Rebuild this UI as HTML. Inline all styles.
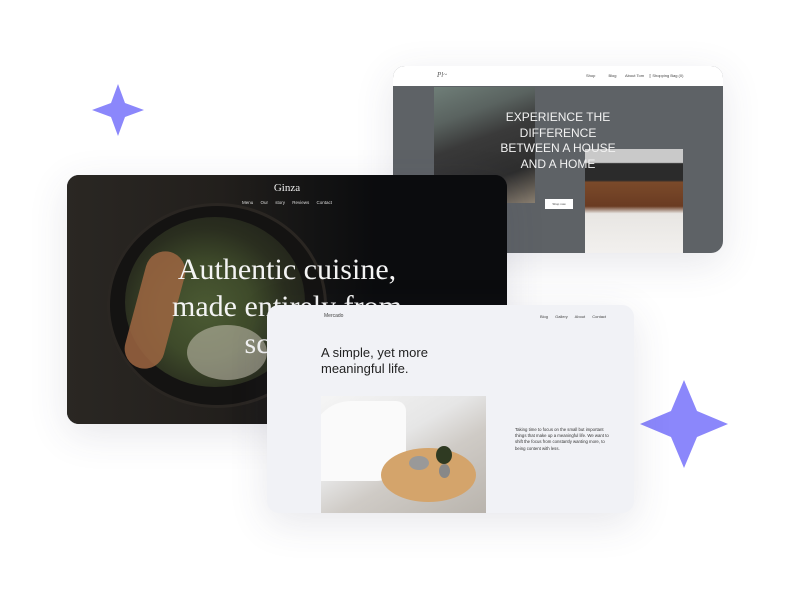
<!DOCTYPE html>
<html><head><meta charset="utf-8"><style>
*{margin:0;padding:0;box-sizing:border-box}
body{width:806px;height:608px;background:#fff;position:relative;overflow:hidden;font-family:"Liberation Sans",sans-serif}
.abs{position:absolute}
.card{position:absolute;overflow:hidden;border-radius:12px;box-shadow:0 10px 40px rgba(60,60,90,.12)}
</style></head><body>
<svg class="abs" style="left:0;top:0" width="806" height="608">
<path d="M118 84 L125 103 L144 110 L125 117 L118 136 L111 117 L92 110 L111 103Z" fill="#8b87fb"/>
<path d="M684 380 L697 411 L728 424 L697 437 L684 468 L671 437 L640 424 L671 411Z" fill="#8b87fb"/>
</svg>

<div class="card" style="left:393px;top:66px;width:330px;height:187px;background:#5e6266">
  <div class="abs" style="left:0;top:0;width:330px;height:20px;background:#fff"></div>
  <div class="abs" style="left:44px;top:5px;font:italic 7px 'Liberation Serif',serif;color:#555">Pl~</div>
  <div class="abs" style="left:193px;top:7px;font-size:4px;color:#444;word-spacing:12px">Shop Blog</div>
  <div class="abs" style="left:232px;top:7px;font-size:4px;color:#444">About Tom</div>
  <div class="abs" style="left:256px;top:7px;font-size:4px;color:#444">▯ Shopping Bag (0)</div>
  <div class="abs" style="left:41px;top:21px;width:101px;height:116px;background:linear-gradient(160deg,#6f7e78 0%,#5a6360 25%,#3a3a3a 45%,#2e2e2e 75%,#8a7f70 100%)"></div>
  <div class="abs" style="left:192px;top:83px;width:98px;height:104px;background:linear-gradient(180deg,#c9c9c9 0%,#c9c9c9 13%,#2b2b2b 14%,#2b2b2b 30%,#7b4a2a 32%,#6a3b22 55%,#e8e6e3 62%,#f2f0ee 100%)"></div>
  <div class="abs" style="left:0;top:44px;width:330px;text-align:center;color:#f2f2f2;font-size:12px;line-height:15.7px">EXPERIENCE THE<br>DIFFERENCE<br>BETWEEN A HOUSE<br>AND A HOME</div>
  <div class="abs" style="left:152px;top:133px;width:28px;height:10px;background:#fff;font-size:3px;color:#444;text-align:center;line-height:10px">Shop now</div>
</div>

<div class="card" style="left:67px;top:175px;width:440px;height:249px;background:#0b0c0e">
  <div class="abs" style="left:0;top:0;width:440px;height:249px;background:linear-gradient(90deg,#2a2723 0%,#221f1c 35%,#141414 55%,#0b0c0e 70%)"></div>
  <div class="abs" style="left:40px;top:28px;width:220px;height:205px;border-radius:50%;background:#141312;border:3px solid #2a2622"></div>
  <div class="abs" style="left:58px;top:42px;width:180px;height:170px;border-radius:50%;background:radial-gradient(circle at 45% 55%,#4b5a33 0%,#3e4a2a 35%,#2a2e1f 60%,#1a1a17 100%)"></div>
  <div class="abs" style="left:68px;top:75px;width:40px;height:120px;border-radius:20px;background:#9d6642;opacity:.85;transform:rotate(15deg)"></div>
  <div class="abs" style="left:120px;top:150px;width:80px;height:55px;border-radius:50%;background:#c9c3b5;opacity:.55"></div>
  <div class="abs" style="left:0;top:7px;width:440px;text-align:center;color:#eee;font:11px 'Liberation Serif',serif">Ginza</div>
  <div class="abs" style="left:0;top:25px;width:440px;text-align:center;color:#ddd;font-size:4.5px;word-spacing:6px">Menu Our&nbsp;story Reviews Contact</div>
  <div class="abs" style="left:0;top:76px;width:440px;text-align:center;color:#f4f4f4;font:30px/37px 'Liberation Serif',serif">Authentic cuisine,<br>made entirely from<br>scratch</div>
</div>

<div class="card" style="left:267px;top:305px;width:367px;height:208px;background:#f1f2f6">
  <div class="abs" style="left:57px;top:8px;font-size:5px;color:#444">Mercado</div>
  <div class="abs" style="left:273px;top:9px;font-size:4px;color:#444;word-spacing:6px">Blog Gallery About Contact</div>
  <div class="abs" style="left:54px;top:40px;font-size:13px;line-height:16px;color:#222">A simple, yet more<br>meaningful life.</div>
  <div class="abs" style="left:54px;top:91px;width:165px;height:117px;overflow:hidden;background:linear-gradient(150deg,#f5f5f5 0%,#e6e6e6 40%,#cfcbc6 60%,#b9b4ad 100%)">
    <div class="abs" style="left:-10px;top:5px;width:95px;height:80px;border-radius:40px 10px 30px 10px;background:#fafafa"></div>
    <div class="abs" style="left:60px;top:52px;width:95px;height:54px;border-radius:50%;background:#d4a46b"></div>
    <div class="abs" style="left:88px;top:60px;width:20px;height:14px;border-radius:50%;background:#999"></div>
    <div class="abs" style="left:118px;top:68px;width:11px;height:14px;border-radius:50%;background:#888"></div>
    <div class="abs" style="left:115px;top:50px;width:16px;height:18px;border-radius:50%;background:#2f3a22"></div>
  </div>
  <div class="abs" style="left:248px;top:122px;width:100px;font-size:4.3px;line-height:6.2px;color:#333">Taking time to focus on the small but important things that make up a meaningful life. We want to shift the focus from constantly wanting more, to being content with less.</div>
</div>
</body></html>
